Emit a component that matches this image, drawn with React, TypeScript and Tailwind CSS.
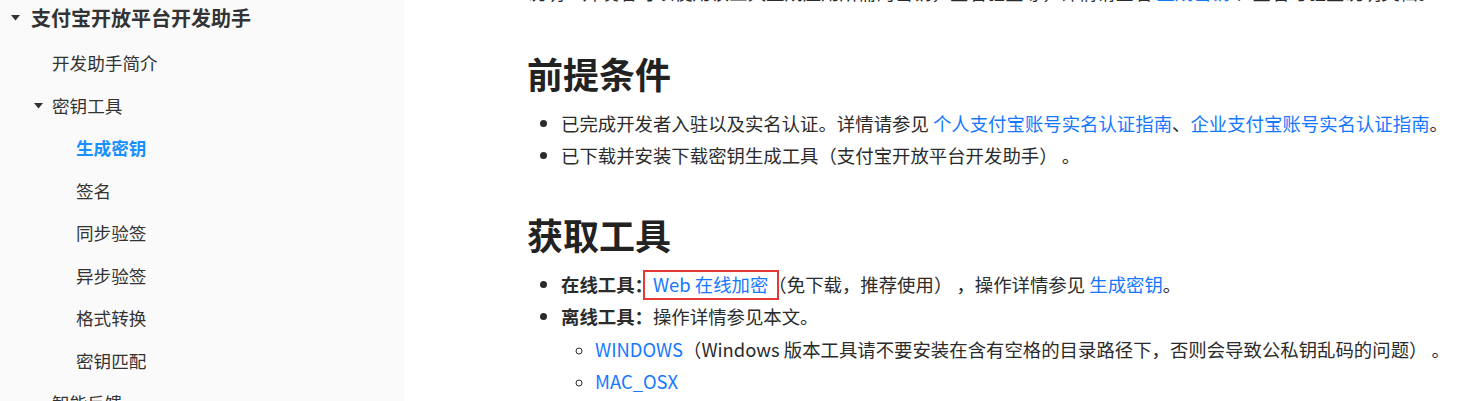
const font = { fontFamily: '"Noto Sans CJK SC", "Microsoft YaHei", sans-serif' };

function Caret() {
  return (
    <svg width="9" height="6" viewBox="0 0 9 6" className="shrink-0">
      <path d="M0 0 L9 0 L4.5 5.5 Z" fill="#333" />
    </svg>
  );
}

const tools = ["签名", "同步验签", "异步验签", "格式转换", "密钥匹配"];

function Sidebar() {
  return (
    <aside className="w-[404px] shrink-0 bg-[#fafafa] text-[#333] text-[17.6px]">
      <div className="h-[36px] flex items-center pl-[11px] gap-[11px]">
        <Caret />
        <span className="text-[20px] font-bold">支付宝开放平台开发助手</span>
      </div>
      <div className="mt-[6px] h-[42.5px] flex items-center pl-[52px]">开发助手简介</div>
      <div className="h-[42.5px] flex items-center pl-[34px] gap-[9px]">
        <Caret />
        <span>密钥工具</span>
      </div>
      <div className="h-[42.5px] flex items-center pl-[76px] font-bold text-[#1890ff]">生成密钥</div>
      {tools.map((t) => (
        <div key={t} className="h-[42.5px] flex items-center pl-[76px]">
          {t}
        </div>
      ))}
      <div className="h-[42.5px] flex items-center pl-[52px]">智能反馈</div>
    </aside>
  );
}

function Link({ children }: { children: React.ReactNode }) {
  return <a className="text-[#1677ff]">{children}</a>;
}

export default function App() {
  return (
    <div className="flex w-[1477px] h-[401px] overflow-hidden bg-white" style={font}>
      <Sidebar />
      <main className="flex-1 pl-[123px] text-[#2b2b2b] text-[18.4px] leading-[32.5px] whitespace-nowrap">
        <p className="mt-[-24px]">
          说明：开发者可以使用该工具生成应用所需的密钥，签名验签等，详情请查看 <Link>生成密钥</Link> 、签名与验签说明文档。
        </p>
        <h2 className="mt-[39px] text-[36px] leading-[50px] font-bold text-[#222]">前提条件</h2>
        <ul className="mt-[9px] list-disc pl-[34px]">
          <li>
            已完成开发者入驻以及实名认证。详情请参见 <Link>个人支付宝账号实名认证指南</Link>、<Link>企业支付宝账号实名认证指南</Link>。
          </li>
          <li>已下载并安装下载密钥生成工具（支付宝开放平台开发助手）&nbsp;。</li>
        </ul>
        <h2 className="mt-[37px] text-[36px] leading-[50px] font-bold text-[#222]">获取工具</h2>
        <ul className="mt-[9px] list-disc pl-[34px]">
          <li>
            <b>在线工具：</b>
            <span className="relative">
              <Link>Web 在线加密</Link>
              <span className="absolute left-[-10px] right-[-11px] top-[-1px] bottom-[-3px] border-2 border-[#e53935] pointer-events-none" />
            </span>
            （免下载，推荐使用）&nbsp;，操作详情参见 <Link>生成密钥</Link>。
          </li>
          <li>
            <b>离线工具：</b>操作详情参见本文。
            <ul className="list-[circle] pl-[34px] marker:text-[16px]">
              <li>
                <Link>WINDOWS</Link>（Windows 版本工具请不要安装在含有空格的目录路径下，否则会导致公私钥乱码的问题）&nbsp;。
              </li>
              <li>
                <Link>MAC_OSX</Link>
              </li>
            </ul>
          </li>
        </ul>
      </main>
    </div>
  );
}
